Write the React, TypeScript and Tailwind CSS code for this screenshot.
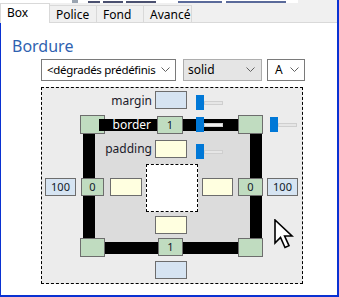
import React from "react";

type Cell = {
  x: number;
  y: number;
  w: number;
  h: number;
  kind: "margin" | "border" | "padding";
  value?: string;
};

// positions inside the dashed margin box (padding-box origin)
const cells: Cell[] = [
  { x: 38, y: 27, w: 25, h: 19, kind: "border" },
  { x: 196, y: 27, w: 25, h: 19, kind: "border" },
  { x: 38, y: 150, w: 25, h: 19, kind: "border" },
  { x: 196, y: 150, w: 25, h: 19, kind: "border" },
  { x: 113, y: 3, w: 32, h: 18, kind: "margin" },
  { x: 115, y: 28, w: 26, h: 18, kind: "border", value: "1" },
  { x: 113, y: 52, w: 32, h: 18, kind: "padding" },
  { x: 3, y: 90, w: 31, h: 18, kind: "margin", value: "100" },
  { x: 39, y: 90, w: 23, h: 18, kind: "border", value: "0" },
  { x: 68, y: 90, w: 32, h: 18, kind: "padding" },
  { x: 160, y: 90, w: 31, h: 18, kind: "padding" },
  { x: 196, y: 90, w: 25, h: 18, kind: "border", value: "0" },
  { x: 225, y: 90, w: 31, h: 18, kind: "margin", value: "100" },
  { x: 113, y: 128, w: 32, h: 18, kind: "padding" },
  { x: 116, y: 150, w: 25, h: 18, kind: "border", value: "1" },
  { x: 113, y: 173, w: 32, h: 18, kind: "margin" },
];

const cellBg = {
  margin: "bg-[#d6e4f2]",
  border: "bg-[#c0dcc0]",
  padding: "bg-[#ffffe0]",
};

const Chevron = () => (
  <svg width="9" height="6" viewBox="0 0 9 6" className="shrink-0">
    <polyline points="0.5,0.5 4.5,4.5 8.5,0.5" fill="none" stroke="#606060" strokeWidth="1" />
  </svg>
);

const Slider = ({ x, y, onDark }: { x: number; y: number; onDark?: boolean }) => (
  <div className="absolute flex items-center" style={{ left: x, top: y }}>
    <div className="w-[8px] h-[15px] bg-[#0078d7]" />
    <div className={`w-[19px] h-[4px] border border-[#cfcfcf] ${onDark ? "bg-[#f0f0f0]" : "bg-[#e6e6e6]"}`} />
  </div>
);

export default function App() {
  return (
    <div
      className="w-[339px] h-[297px] bg-white flex flex-col overflow-hidden border-r-2 border-b-2 border-[#0a32d2] text-black"
      style={{ fontFamily: '"Noto Sans", "Open Sans", sans-serif' }}
    >
      {/* edge of the window behind */}
      <div className="h-[3px] flex bg-[#f0f0f0]">
        <div className="w-[72px] bg-white" />
        <div className="w-[6px] bg-[#9aa4b0]" />
        <div className="w-[10px] bg-white" />
        <div className="w-[90px] flex gap-[3px] items-end bg-white">
          <div className="w-[12px] h-[2px] bg-[#4a5070]" />
          <div className="w-[20px] h-[2px] bg-[#4a5070]" />
          <div className="w-[30px] h-[2px] bg-[#4a5070]" />
        </div>
        <div className="w-[120px] flex gap-[4px] items-end bg-white">
          <div className="w-[44px] h-[2px] bg-[#5a6a9a]" />
          <div className="w-[60px] h-[2px] bg-[#5a6a9a]" />
        </div>
        <div className="flex-1 bg-[#f0f0f0]" />
      </div>

      {/* tabs */}
      <div className="h-[20px] flex items-end bg-[#f0f0f0] border-b border-[#d9d9d9] text-[12px]">
        <div className="h-[20px] w-[50px] -mb-px bg-white border-l border-t border-r border-[#d9d9d9] pl-[6px] leading-[18px] relative z-10">
          Box
        </div>
        <div className="h-[17px] w-[47px] border-t border-r border-[#d9d9d9] pl-[6px] leading-[17px]">Police</div>
        <div className="h-[17px] w-[47px] border-t border-r border-[#d9d9d9] pl-[6px] leading-[17px]">Fond</div>
        <div className="h-[17px] w-[48px] border-t border-r border-[#d9d9d9] pl-[6px] leading-[17px]">Avancé</div>
      </div>

      {/* page */}
      <div className="flex-1 border-l border-[#0a32d2] pt-[13px] pl-[11px]">
        <div className="text-[16px] leading-[20px] text-[#2f62b0]">Bordure</div>

        <div className="mt-[3px] ml-[29px] flex text-[12px]">
          <div className="w-[135px] h-[22px] border border-[#7a7a7a] bg-white flex items-center justify-between pl-[5px] pr-[5px]">
            <span className="whitespace-nowrap text-[11.5px] tracking-[-0.3px]">&lt;dégradés prédéfinis</span>
            <Chevron />
          </div>
          <div className="ml-[7px] w-[79px] h-[22px] border border-[#adadad] bg-[#e5e5e5] flex items-center justify-between pl-[4px] pr-[6px]">
            <span>solid</span>
            <Chevron />
          </div>
          <div className="ml-[5px] w-[38px] h-[22px] border border-[#7a7a7a] bg-white flex items-center justify-between pl-[7px] pr-[5px]">
            <span>A</span>
            <Chevron />
          </div>
        </div>

        {/* box model diagram */}
        <div className="mt-[6px] ml-[29px] w-[262px] h-[197px] border border-dashed border-black bg-[#ececec] relative text-[12px]">
          {/* border frame with padding area */}
          <div className="absolute left-[41px] top-[31px] w-[179px] h-[135px] border-[12px] border-black bg-[#dcdcdc]" />
          {/* content */}
          <div className="absolute left-[104px] top-[76px] w-[52px] h-[48px] border border-dashed border-black bg-white" />

          {cells.map((c, i) => (
            <div
              key={i}
              className={`absolute border border-[#6d6d6d] ${cellBg[c.kind]} flex items-center justify-center text-[11px] text-[#101828]`}
              style={{ left: c.x, top: c.y, width: c.w, height: c.h }}
            >
              {c.value}
            </div>
          ))}

          <div className="absolute left-[57px] top-[4px] w-[53px] h-[17px] text-right leading-[17px] text-[#1a1a2a]">margin</div>
          <div className="absolute left-[57px] top-[31px] w-[56px] h-[12px] bg-black text-white text-[12px] leading-[12px] pr-[4px] text-right">
            border
          </div>
          <div className="absolute left-[57px] top-[52px] w-[53px] h-[18px] text-right leading-[18px] text-[#1a1a2a]">padding</div>

          <Slider x={154} y={7} />
          <Slider x={154} y={29} onDark />
          <Slider x={154} y={56} />
          <Slider x={228} y={29} />

          {/* mouse pointer */}
          <svg className="absolute left-[232px] top-[131px]" width="22" height="32" viewBox="0 0 22 32">
            <path
              d="M1 1 L1 24 L6.5 18.5 L11 28.5 L15 26.7 L10.6 17 L18 17 Z"
              fill="white"
              stroke="black"
              strokeWidth="1.6"
              strokeLinejoin="miter"
            />
          </svg>
        </div>
      </div>
    </div>
  );
}
